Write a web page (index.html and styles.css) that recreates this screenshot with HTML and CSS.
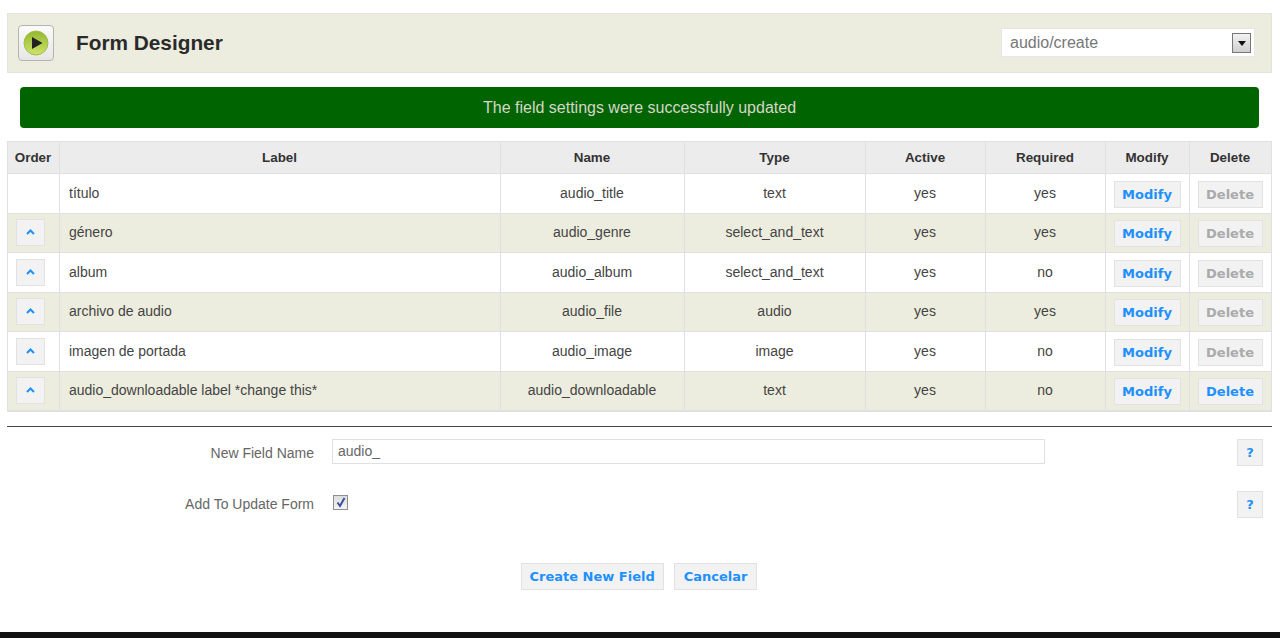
FILE: index.html
```html
<!DOCTYPE html>
<html lang="en">
<head>
<meta charset="utf-8">
<title>Form Designer</title>
<link rel="stylesheet" href="styles.css">
</head>
<body>
<div class="page">
  <header class="top">
    <div class="logo">
      <svg width="26" height="26" viewBox="0 0 26 26">
        <defs><linearGradient id="g" x1="0" y1="0" x2="0" y2="1"><stop offset="0" stop-color="#93b832"/><stop offset="1" stop-color="#cfe36a"/></linearGradient></defs>
        <circle cx="13" cy="13" r="12" fill="url(#g)" stroke="#a3bf45" stroke-width="1"/>
        <path d="M9 7 L19.5 13 L9 19 Z" fill="#222"/>
      </svg>
    </div>
    <h1 class="title">Form Designer</h1>
    <div class="select">
      <span>audio/create</span>
      <span class="arrow"><svg width="8" height="5" viewBox="0 0 8 5"><path d="M0 0H8L4 5Z" fill="#111"/></svg></span>
    </div>
  </header>
  <div class="notice">The field settings were successfully updated</div>
  <table class="grid">
    <colgroup>
      <col class="c1"><col class="c2"><col class="c3"><col class="c4"><col class="c5"><col class="c6"><col class="c7"><col class="c8">
    </colgroup>
    <thead>
      <tr><th>Order</th><th>Label</th><th>Name</th><th>Type</th><th>Active</th><th>Required</th><th>Modify</th><th>Delete</th></tr>
    </thead>
    <tbody>
      <tr><td></td><td class="left">título</td><td>audio_title</td><td>text</td><td>yes</td><td>yes</td><td><a class="btn">Modify</a></td><td><a class="btn off">Delete</a></td></tr>
      <tr><td><a class="btn up"><svg width="9" height="6" viewBox="0 0 9 6"><path d="M1 5 L4.5 1.5 L8 5" fill="none" stroke="#1e90ff" stroke-width="2"/></svg></a></td><td class="left">género</td><td>audio_genre</td><td>select_and_text</td><td>yes</td><td>yes</td><td><a class="btn">Modify</a></td><td><a class="btn off">Delete</a></td></tr>
      <tr><td><a class="btn up"><svg width="9" height="6" viewBox="0 0 9 6"><path d="M1 5 L4.5 1.5 L8 5" fill="none" stroke="#1e90ff" stroke-width="2"/></svg></a></td><td class="left">album</td><td>audio_album</td><td>select_and_text</td><td>yes</td><td>no</td><td><a class="btn">Modify</a></td><td><a class="btn off">Delete</a></td></tr>
      <tr><td><a class="btn up"><svg width="9" height="6" viewBox="0 0 9 6"><path d="M1 5 L4.5 1.5 L8 5" fill="none" stroke="#1e90ff" stroke-width="2"/></svg></a></td><td class="left">archivo de audio</td><td>audio_file</td><td>audio</td><td>yes</td><td>yes</td><td><a class="btn">Modify</a></td><td><a class="btn off">Delete</a></td></tr>
      <tr><td><a class="btn up"><svg width="9" height="6" viewBox="0 0 9 6"><path d="M1 5 L4.5 1.5 L8 5" fill="none" stroke="#1e90ff" stroke-width="2"/></svg></a></td><td class="left">imagen de portada</td><td>audio_image</td><td>image</td><td>yes</td><td>no</td><td><a class="btn">Modify</a></td><td><a class="btn off">Delete</a></td></tr>
      <tr><td><a class="btn up"><svg width="9" height="6" viewBox="0 0 9 6"><path d="M1 5 L4.5 1.5 L8 5" fill="none" stroke="#1e90ff" stroke-width="2"/></svg></a></td><td class="left">audio_downloadable label *change this*</td><td>audio_downloadable</td><td>text</td><td>yes</td><td>no</td><td><a class="btn">Modify</a></td><td><a class="btn">Delete</a></td></tr>
    </tbody>
  </table>
  <hr class="rule">
  <div class="row row-name">
    <label class="lab">New Field Name</label>
    <div class="input">audio_</div>
    <a class="btn help">?</a>
  </div>
  <div class="row row-check">
    <label class="lab lab-check">Add To Update Form</label>
    <div class="check-wrap"><span class="check"><svg width="10" height="11" viewBox="0 0 10 11"><path d="M1.5 5.5 L4 9 L8.5 1" fill="none" stroke="#3a4f9f" stroke-width="2"/></svg></span></div>
    <a class="btn help">?</a>
  </div>
  <div class="actions">
    <a class="btn big">Create New Field</a>
    <a class="btn big cancel">Cancelar</a>
  </div>
</div>
<footer class="foot"></footer>
</body>
</html>
```
FILE: styles.css
```css
html, body { margin: 0; padding: 0; background: #fff; }
body { height: 638px; overflow: hidden; font-family: "Liberation Sans", Arial, sans-serif; color: #333; display: flex; flex-direction: column; }
.page { flex: 1; padding: 13px 8px 0 7px; }
.top { height: 60px; box-sizing: border-box; background: #ecedde; border: 1px solid #e4e4da; display: flex; align-items: center; padding: 0 16px 0 10px; }
.logo { width: 36px; height: 36px; box-sizing: border-box; border: 1px solid #b5b5b0; border-radius: 4px; background: linear-gradient(#fbfbfb, #e6e6e6); display: flex; align-items: center; justify-content: center; }
.title { margin: 0 0 0 22px; font-size: 20.8px; font-weight: bold; color: #2a2a2a; flex: 1; }
.select { width: 254px; height: 29px; margin-bottom: 1px; box-sizing: border-box; background: #fff; border: 1px solid #e6e6e6; display: flex; align-items: center; justify-content: space-between; padding: 1px 3px 0 8px; font-size: 16px; color: #777; }
.arrow { width: 19px; height: 20px; box-sizing: border-box; border: 1px solid #777; background: linear-gradient(#f2f2f2, #cfcfcf); display: flex; align-items: center; justify-content: center; }
.notice { margin: 14px 13px 0 13px; height: 41px; border-radius: 4px; background: #006400; color: #d6d6c8; font-size: 16px; line-height: 41px; text-align: center; }
.grid { margin-top: 13px; width: 1264px; table-layout: fixed; border-collapse: collapse; font-size: 14px; color: #444; border: 1px solid #e0e0e0; border-bottom: 2px solid #e0e0e0; }
.c1 { width: 52px; } .c2 { width: 441px; } .c3 { width: 184px; } .c4 { width: 181px; }
.c5 { width: 120px; } .c6 { width: 120px; } .c7 { width: 84px; } .c8 { width: 82px; }
.grid th { height: 31px; padding: 0 1px 0 0; background: #ececec; border: 1px solid #e0e0e0; color: #333; font-size: 13.4px; font-weight: bold; }
.grid td { height: 37.5px; padding: 0 1px 1px 0; text-align: center; border: 1px solid #e0e0e0; }
.grid tbody tr:nth-child(even) td { background: #ecedde; }
.grid td.left { text-align: left; padding-left: 9px; }
.btn { display: inline-block; box-sizing: border-box; height: 27px; line-height: 25px; border: 1px solid #e2e2e2; background: #f2f2f2; color: #1e90ff; font-family: "DejaVu Sans", Verdana, sans-serif; font-size: 13px; font-weight: bold; text-align: center; vertical-align: middle; }
.grid .btn { width: 67px; margin-top: 3px; }
.grid td:last-child .btn { width: 65px; }
.btn.off { color: #aaa; }
.grid .btn.up { width: 29px; margin-top: 1px; margin-right: 5px; line-height: 21px; }
hr.rule { margin: 14px 0 0 0; height: 1px; border: 0; background: #444; }
.row { display: flex; }
.row-name { margin-top: 12px; height: 27px; align-items: center; }
.row-check { margin-top: 25px; height: 27px; align-items: center; }
.lab { width: 307px; text-align: right; font-size: 14px; color: #666; }
.lab-check { padding-bottom: 2px; }
.input { margin-left: 18px; width: 713px; height: 25px; align-self: flex-start; box-sizing: border-box; border: 1px solid #e0e0e0; padding-left: 5px; line-height: 22px; font-size: 14px; color: #666; }
.check-wrap { margin-left: 19px; width: 712px; margin-top: -5px; }
.check { display: block; width: 15px; height: 15px; box-sizing: border-box; border: 1px solid #8f8f8f; background: linear-gradient(#ddd, #f4f4f4); text-align: center; line-height: 13px; }
.btn.help { width: 26px; margin-left: 192px; }
.actions { margin-top: 45px; display: flex; justify-content: center; gap: 10px; padding-right: 1px; }
.btn.big { padding: 0 8px; }
.btn.cancel { padding: 0 9px; }
.foot { height: 6px; background: #111; }
```
